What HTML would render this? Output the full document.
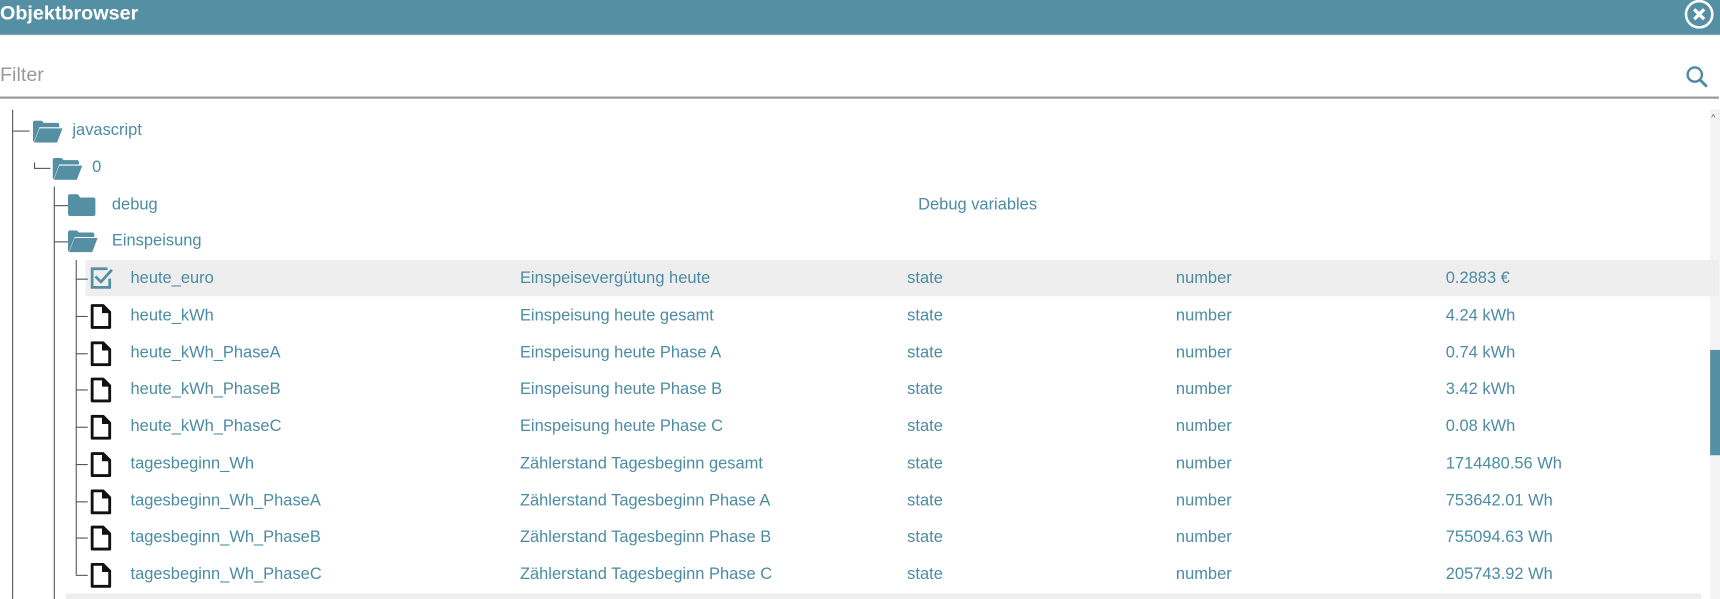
<!DOCTYPE html>
<html><head><style>
body{margin:0;width:1720px;height:599px;overflow:hidden;background:#fff;font-family:"Liberation Sans",sans-serif;position:relative}
#w{position:absolute;left:0;top:0;width:1568px;height:546px;transform:scale(1.09694);transform-origin:0 0}
.a{position:absolute}
.t{position:absolute;font-size:15px;line-height:20px;color:#4b8ca3;white-space:nowrap}
.v{position:absolute;width:1px;background:#555}
.h{position:absolute;height:1px;background:#555}
</style></head><body><div id="w">
<div class="a" style="left:0;top:0;width:1568px;height:31px;background:#558fa4;border-bottom:1px solid #8fa9b3"></div>
<div class="a" style="left:0;top:0;font-size:18px;font-weight:bold;color:#fff;line-height:24px">Objektbrowser</div>
<svg class="a" style="left:1534px;top:0" width="30" height="28" viewBox="0 0 30 28"><circle cx="15" cy="13" r="12" fill="none" stroke="#fff" stroke-width="2.3"/><path d="M10.5 8.5L19.5 17.5M19.5 8.5L10.5 17.5" stroke="#fff" stroke-width="3"/></svg>
<div class="a" style="left:0;top:57px;font-size:18px;color:#999;line-height:22px">Filter</div>
<svg class="a" style="left:1536px;top:59px" width="24" height="24" viewBox="0 0 24 24"><circle cx="9" cy="9" r="6.5" fill="none" stroke="#4b8ca3" stroke-width="2.2"/><path d="M14 14L20 20" stroke="#4b8ca3" stroke-width="2.6"/></svg>
<div class="a" style="left:0;top:88px;width:1567px;height:2px;background:#999"></div>
<div class="a" style="left:1559px;top:100px;width:9px;height:446px;background:#f3f3f3"></div>
<div class="a" style="left:1560px;top:103px;font-size:8px;color:#555">^</div>
<div class="a" style="left:1559px;top:319px;width:9px;height:96px;background:#558fa4"></div>
<div class="a" style="left:60px;top:541px;width:1491px;height:5px;background:#eee"></div>
<div class="a" style="left:78px;top:237px;width:1489px;height:33px;background:#eee"></div>

<div class="v" style="left:11px;top:100px;height:446px"></div>
<div class="h" style="left:11px;top:119px;width:16px"></div>
<div class="v" style="left:31px;top:148px;height:6px"></div>
<div class="h" style="left:31px;top:153px;width:15px"></div>
<div class="v" style="left:49px;top:170px;height:376px"></div>
<div class="h" style="left:49px;top:187px;width:13px"></div>
<div class="h" style="left:49px;top:220px;width:13px"></div>
<div class="v" style="left:69px;top:237px;height:287px"></div>

<svg class="a" style="left:30px;top:110px" width="28" height="20" viewBox="0 0 28 20"><path d="M0 2Q0 0 2 0H8L10 2H22Q24 2 24 4V6H6L1 19H0Z" fill="#558fa4"/><path d="M6 7H27L22 20H1Z" fill="#558fa4"/></svg>
<div class="t" style="left:66px;top:109px">javascript</div>
<svg class="a" style="left:48px;top:144px" width="28" height="20" viewBox="0 0 28 20"><path d="M0 2Q0 0 2 0H8L10 2H22Q24 2 24 4V6H6L1 19H0Z" fill="#558fa4"/><path d="M6 7H27L22 20H1Z" fill="#558fa4"/></svg>
<div class="t" style="left:84px;top:143px">0</div>
<svg class="a" style="left:62px;top:177px" width="25" height="20" viewBox="0 0 25 20"><path d="M0 2Q0 0 2 0H9L11 3H23Q25 3 25 5V18Q25 20 23 20H2Q0 20 0 18Z" fill="#558fa4"/></svg>
<div class="t" style="left:102px;top:177px">debug</div>
<div class="t" style="left:837px;top:177px">Debug variables</div>
<svg class="a" style="left:62px;top:210px" width="28" height="20" viewBox="0 0 28 20"><path d="M0 2Q0 0 2 0H8L10 2H22Q24 2 24 4V6H6L1 19H0Z" fill="#558fa4"/><path d="M6 7H27L22 20H1Z" fill="#558fa4"/></svg>
<div class="t" style="left:102px;top:210px">Einspeisung</div>

<div class="h" style="left:69px;top:254px;width:11px"></div>
<svg class="a" style="left:81px;top:242px" width="24" height="24" viewBox="0 0 24 24"><path d="M17 3H3V20H19V12" fill="none" stroke="#558fa4" stroke-width="2.5"/><path d="M6 10L11 15L21 4" fill="none" stroke="#558fa4" stroke-width="2.5"/></svg>
<div class="t" style="left:119px;top:244px">heute_euro</div><div class="t" style="left:474px;top:244px">Einspeisevergütung heute</div><div class="t" style="left:827px;top:244px">state</div><div class="t" style="left:1072px;top:244px">number</div><div class="t" style="left:1318px;top:244px">0.2883 €</div>

<div id="rows"></div>
</div>
<script>
var r=[["heute_kWh","Einspeisung heute gesamt","4.24 kWh"],["heute_kWh_PhaseA","Einspeisung heute Phase A","0.74 kWh"],["heute_kWh_PhaseB","Einspeisung heute Phase B","3.42 kWh"],["heute_kWh_PhaseC","Einspeisung heute Phase C","0.08 kWh"],["tagesbeginn_Wh","Zählerstand Tagesbeginn gesamt","1714480.56 Wh"],["tagesbeginn_Wh_PhaseA","Zählerstand Tagesbeginn Phase A","753642.01 Wh"],["tagesbeginn_Wh_PhaseB","Zählerstand Tagesbeginn Phase B","755094.63 Wh"],["tagesbeginn_Wh_PhaseC","Zählerstand Tagesbeginn Phase C","205743.92 Wh"]];
var h="";
r.forEach(function(x,i){var c=288+i*33.7;var ct=Math.round(c-10);
h+='<div class="h" style="left:69px;top:'+Math.round(c)+'px;width:11px"></div>';
h+='<svg class="a" style="left:82px;top:'+Math.round(c-11)+'px" width="20" height="23" viewBox="0 0 20 23"><path d="M2 1.5H12L18 7.5V21.5H2Z" fill="none" stroke="#111" stroke-width="2.6" stroke-linejoin="round"/><path d="M11 1.5V8.5H18" fill="#111"/></svg>';
h+='<div class="t" style="left:119px;top:'+ct+'px">'+x[0]+'</div><div class="t" style="left:474px;top:'+ct+'px">'+x[1]+'</div><div class="t" style="left:827px;top:'+ct+'px">state</div><div class="t" style="left:1072px;top:'+ct+'px">number</div><div class="t" style="left:1318px;top:'+ct+'px">'+x[2]+'</div>';});
document.getElementById("rows").innerHTML=h;
</script>
</body></html>
